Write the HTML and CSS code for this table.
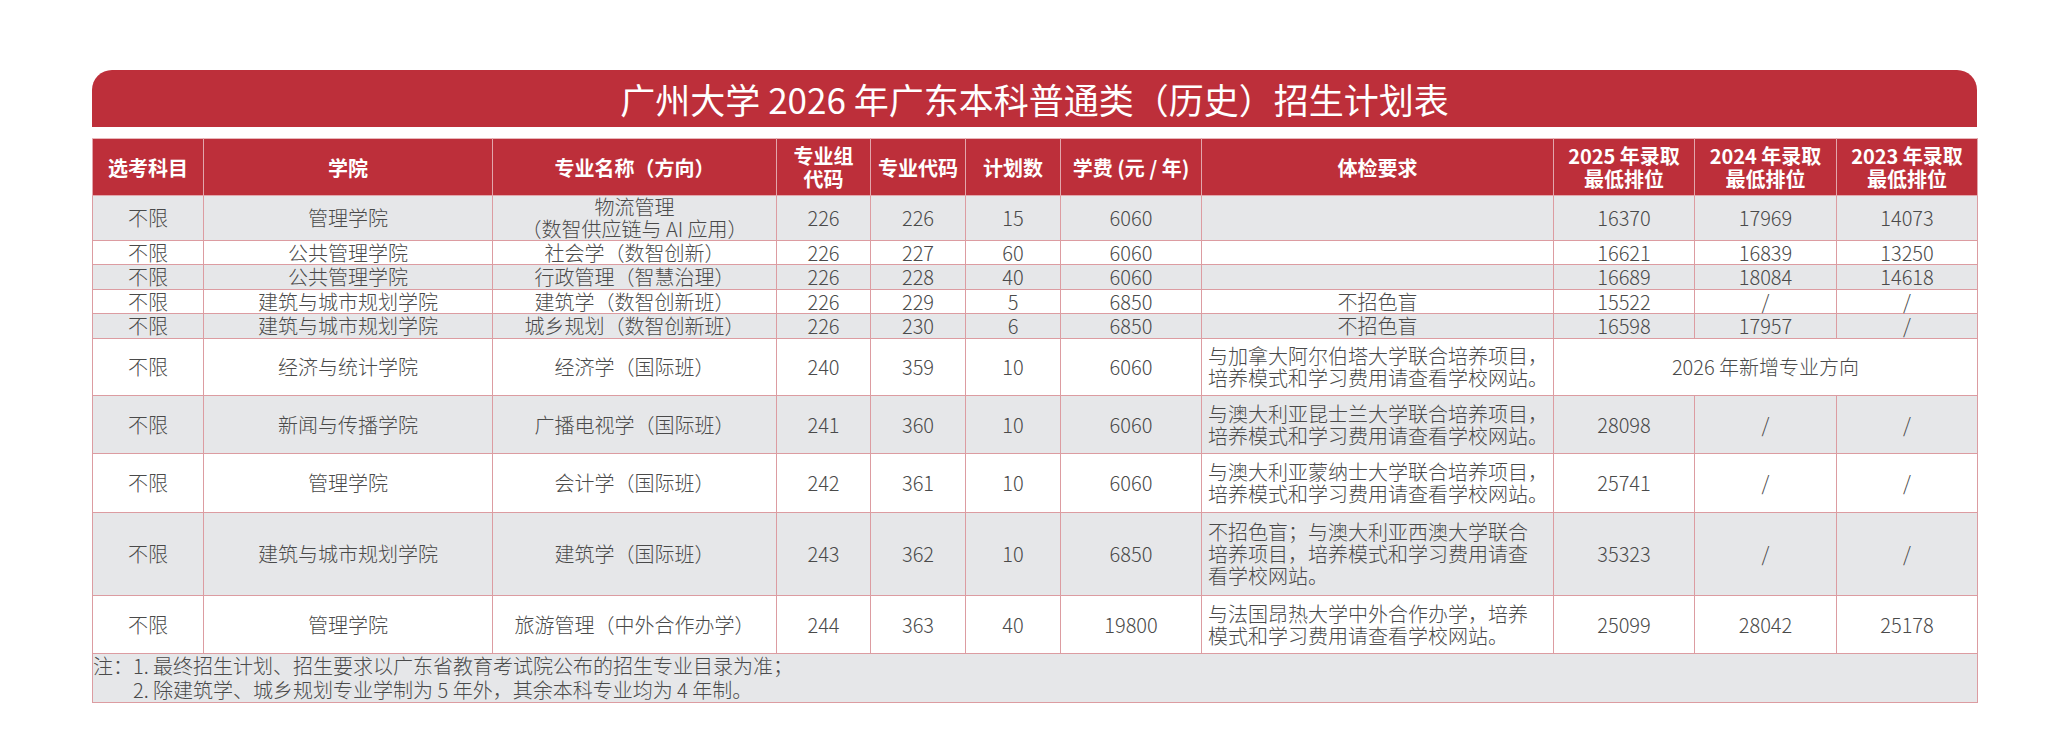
FILE: index.html
```html
<!DOCTYPE html>
<html lang="zh-CN">
<head>
<meta charset="utf-8">
<title>广州大学 2026 年广东本科普通类（历史）招生计划表</title>
<link rel="stylesheet" href="styles.css">
</head>
<body>
<div class="page">
  <div class="banner">广州大学 2026 年广东本科普通类（历史）招生计划表</div>
  <table class="plan">
    <colgroup>
      <col class="c1"><col class="c2"><col class="c3"><col class="c4"><col class="c5"><col class="c6"><col class="c7"><col class="c8"><col class="c9"><col class="c10"><col class="c11">
    </colgroup>
    <thead>
      <tr class="head">
        <th>选考科目</th>
        <th>学院</th>
        <th>专业名称（方向）</th>
        <th>专业组<br>代码</th>
        <th>专业代码</th>
        <th>计划数</th>
        <th>学费 (元 / 年)</th>
        <th>体检要求</th>
        <th>2025 年录取<br>最低排位</th>
        <th>2024 年录取<br>最低排位</th>
        <th>2023 年录取<br>最低排位</th>
      </tr>
    </thead>
    <tbody>
      <tr class="gray h43">
        <td>不限</td><td>管理学院</td><td>物流管理<br>（数智供应链与 AI 应用）</td><td>226</td><td>226</td><td>15</td><td>6060</td><td></td><td>16370</td><td>17969</td><td>14073</td>
      </tr>
      <tr class="h24">
        <td>不限</td><td>公共管理学院</td><td>社会学（数智创新）</td><td>226</td><td>227</td><td>60</td><td>6060</td><td></td><td>16621</td><td>16839</td><td>13250</td>
      </tr>
      <tr class="gray h25">
        <td>不限</td><td>公共管理学院</td><td>行政管理（智慧治理）</td><td>226</td><td>228</td><td>40</td><td>6060</td><td></td><td>16689</td><td>18084</td><td>14618</td>
      </tr>
      <tr class="h24">
        <td>不限</td><td>建筑与城市规划学院</td><td>建筑学（数智创新班）</td><td>226</td><td>229</td><td>5</td><td>6850</td><td>不招色盲</td><td>15522</td><td>/</td><td>/</td>
      </tr>
      <tr class="gray h25">
        <td>不限</td><td>建筑与城市规划学院</td><td>城乡规划（数智创新班）</td><td>226</td><td>230</td><td>6</td><td>6850</td><td>不招色盲</td><td>16598</td><td>17957</td><td>/</td>
      </tr>
      <tr class="h57">
        <td>不限</td><td>经济与统计学院</td><td>经济学（国际班）</td><td>240</td><td>359</td><td>10</td><td>6060</td><td class="note">与加拿大阿尔伯塔大学联合培养项目，<br>培养模式和学习费用请查看学校网站。</td><td colspan="3">2026 年新增专业方向</td>
      </tr>
      <tr class="gray h58">
        <td>不限</td><td>新闻与传播学院</td><td>广播电视学（国际班）</td><td>241</td><td>360</td><td>10</td><td>6060</td><td class="note">与澳大利亚昆士兰大学联合培养项目，<br>培养模式和学习费用请查看学校网站。</td><td>28098</td><td>/</td><td>/</td>
      </tr>
      <tr class="h59">
        <td>不限</td><td>管理学院</td><td>会计学（国际班）</td><td>242</td><td>361</td><td>10</td><td>6060</td><td class="note">与澳大利亚蒙纳士大学联合培养项目，<br>培养模式和学习费用请查看学校网站。</td><td>25741</td><td>/</td><td>/</td>
      </tr>
      <tr class="gray h83">
        <td>不限</td><td>建筑与城市规划学院</td><td>建筑学（国际班）</td><td>243</td><td>362</td><td>10</td><td>6850</td><td class="note">不招色盲；与澳大利亚西澳大学联合<br>培养项目，培养模式和学习费用请查<br>看学校网站。</td><td>35323</td><td>/</td><td>/</td>
      </tr>
      <tr class="h58">
        <td>不限</td><td>管理学院</td><td>旅游管理（中外合作办学）</td><td>244</td><td>363</td><td>40</td><td>19800</td><td class="note">与法国昂热大学中外合作办学，培养<br>模式和学习费用请查看学校网站。</td><td>25099</td><td>28042</td><td>25178</td>
      </tr>
      <tr class="gray h48">
        <td colspan="11" class="remarks">
          <div class="remarks-box">
            <span class="remarks-label">注：</span>
            <div class="remarks-lines">
              <div>1. 最终招生计划、招生要求以广东省教育考试院公布的招生专业目录为准；</div>
              <div>2. 除建筑学、城乡规划专业学制为 5 年外，其余本科专业均为 4 年制。</div>
            </div>
          </div>
        </td>
      </tr>
    </tbody>
  </table>
</div>
</body>
</html>
```

FILE: styles.css
```css
html, body {
  margin: 0;
  padding: 0;
  background: #ffffff;
}

body {
  font-family: "Noto Sans CJK SC", "Noto Sans", sans-serif;
  color: #4a4a4a;
}

.page {
  padding: 70px 0 0 92px;
  width: 1885px;
}

.banner {
  height: 57px;
  line-height: 57px;
  background: #bd2f3a;
  border-radius: 20px 20px 0 0;
  color: #ffffff;
  font-size: 35px;
  font-weight: 400;
  text-align: center;
  margin-bottom: 11px;
}

.plan {
  width: 1885px;
  border-collapse: collapse;
  table-layout: fixed;
  font-size: 20px;
}

.c1 { width: 111px; }
.c2 { width: 289px; }
.c3 { width: 284px; }
.c4 { width: 94px; }
.c5 { width: 95px; }
.c6 { width: 95px; }
.c7 { width: 141px; }
.c8 { width: 352px; }
.c9 { width: 141px; }
.c10 { width: 142px; }
.c11 { width: 141px; }

.head {
  height: 57px;
  background: #bd2f3a;
}

.head th {
  color: #ffffff;
  font-weight: 700;
  font-size: 20px;
  line-height: 23px;
  padding: 0;
  border: 1px solid #e2a6ab;
  border-top-color: #e8b7bb;
  vertical-align: middle;
  white-space: nowrap;
}

.plan td {
  padding: 0 4px;
  text-align: center;
  vertical-align: middle;
  line-height: 22px;
  font-weight: 300;
  color: #4a4a4a;
  border: 1px solid #dc9ca1;
  white-space: nowrap;
}

.plan tr.gray td {
  background: #e6e7e9;
}

.plan td.note {
  text-align: left;
  padding-left: 6px;
}

.h43 { height: 43px; }
.h24 { height: 24px; }
.h25 { height: 25px; }
.h48 { height: 48px; }
.h57 { height: 57px; }
.h58 { height: 58px; }
.h59 { height: 59px; }
.h83 { height: 83px; }

.plan td.remarks {
  text-align: left;
  padding: 0;
  line-height: 24px;
}

.remarks-box {
  display: flex;
  align-items: flex-start;
}

.remarks-label {
  flex: none;
}

.remarks-lines {
  display: flex;
  flex-direction: column;
}
```
